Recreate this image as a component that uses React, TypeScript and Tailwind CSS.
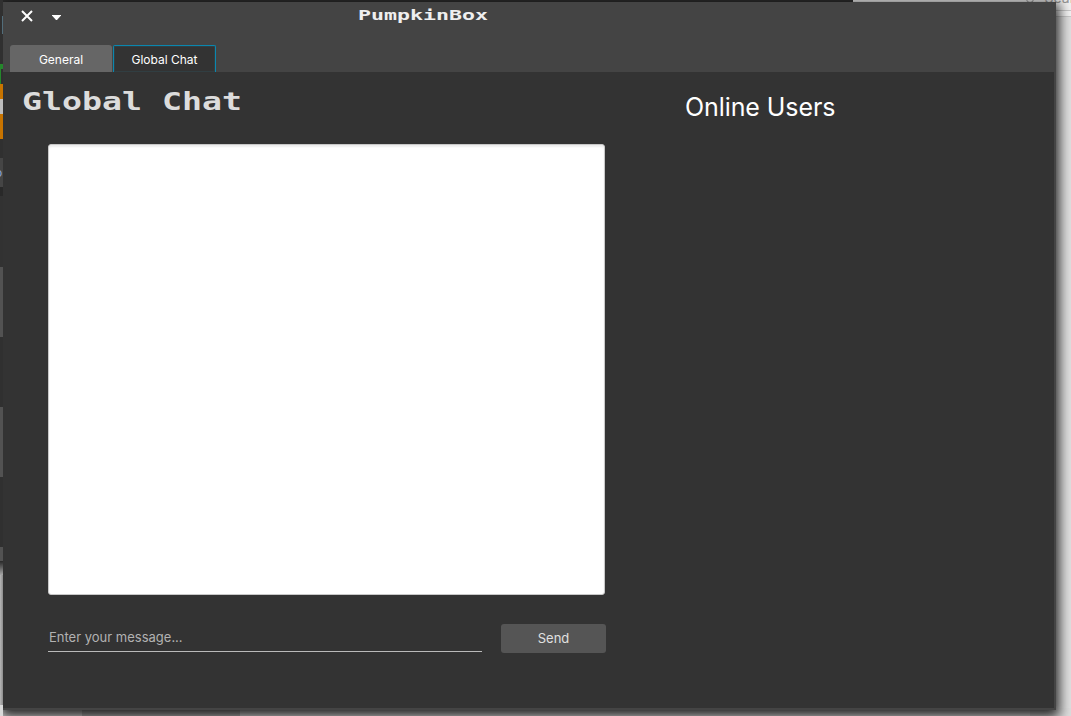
function BackgroundEdge() {
  return (
    <div className="flex w-[3px] flex-col">
      <div className="h-4 bg-[#303030]" />
      <div className="h-[18px] border-l-2 border-[#303030] bg-[#526d7a]" />
      <div className="h-[30px] bg-[#303030]" />
      <div className="h-[5px] bg-[#25872c]" />
      <div className="h-[15px] border-l border-[#25872c] bg-[#303030]" />
      <div className="h-[15px] bg-[#c87400]" />
      <div className="h-[15px] bg-[#bdbdbd]" />
      <div className="h-[25px] bg-[#c87400]" />
      <div className="h-[19px] bg-[#303030]" />
      <div className="h-[29px] overflow-hidden bg-[#454545] pt-[9px]">
        <div className="-ml-[5px] font-['Inter',sans-serif] text-[12px] leading-3 text-[#8fa6d8]">o</div>
      </div>
      <div className="h-[9px] bg-[#292929]" />
      <div className="h-[71px] bg-[#323232]" />
      <div className="h-[70px] bg-[#525252]" />
      <div className="h-[70px] bg-[#303030]" />
      <div className="h-[70px] bg-[#525252]" />
      <div className="h-[70px] bg-[#303030]" />
      <div className="h-[14px] bg-[#525252]" />
      <div className="h-[14px] bg-gradient-to-b from-[#292929] to-[#a8a8a8]" />
      <div className="h-[130px] bg-gradient-to-r from-[#b8b8b8] to-[#8c8c8c]" />
      <div className="flex-1 bg-[#d9d9d9]" />
    </div>
  );
}

function Desktop() {
  return (
    <div className="absolute inset-0 flex flex-col overflow-hidden">
      <div className="flex h-[10px]">
        <div className="w-[853px] bg-[#303030]" />
        <div className="flex flex-1 items-end justify-end overflow-hidden bg-[#f2f2f2] pb-[5px] text-[14px] leading-[14px] text-[#999999]">
          <svg className="mr-[9px] size-[10px]" viewBox="0 0 10 10" fill="none" stroke="currentColor">
            <circle cx="4" cy="4" r="3.5" />
            <path d="m6.5 6.5 3 3" />
          </svg>
          <span className="-mr-5">Search</span>
        </div>
      </div>
      <div className="h-[7px] border-y border-[#c9c9c9] bg-[#f4f4f4]" />
      <div className="flex-1 bg-[#e1e1e1]" />
      <div className="flex h-2">
        <div className="w-[82px] bg-[#eeeeee]" />
        <div className="w-[158px] bg-[#c8c8c8]" />
        <div className="w-[790px] bg-[#f1f1f1]" />
        <div className="flex-1 bg-[#dedede]" />
      </div>
    </div>
  );
}

function TitleBar() {
  return (
    <header className="flex h-[43px] items-start text-white">
      <svg className="ml-[18px] mt-[8px] size-3" viewBox="0 0 12 12" fill="none" stroke="currentColor" strokeWidth="2">
        <path d="M1 1 11 11M11 1 1 11" />
      </svg>
      <svg className="ml-[19px] mt-[13px] h-[5px] w-[9px]" viewBox="0 0 9 5" fill="currentColor">
        <path d="M0 0h9v.5L5 5H4L0 .5z" />
      </svg>
      <h1 className="ml-[297px] mt-[5px] origin-left scale-x-[1.542] whitespace-nowrap font-['DejaVu_Sans_Mono',monospace] text-[14px] leading-4 font-bold text-[#efefef]">
        PumpkinBox
      </h1>
    </header>
  );
}

function Tabs() {
  return (
    <nav className="flex h-[27px] gap-px pl-[7px] text-[12px] text-white">
      <button className="w-[102px] rounded-t-[3px] bg-[#666666] pt-[2px]">General</button>
      <button className="w-[103px] rounded-t-[2px] border border-b-0 border-[#0a87af] bg-[#333333] pt-px shadow-[inset_0_0_0_1px_#313e42]">
        Global Chat
      </button>
    </nav>
  );
}

export default function App() {
  return (
    <div className="relative h-[716px] w-[1071px] overflow-hidden font-['Inter',sans-serif]">
      <Desktop />
      <div className="relative flex h-[716px]">
        <div className="relative z-10 flex">
          <BackgroundEdge />
        </div>
        <div className="mt-[2px] flex h-[708px] w-[1053px] flex-col bg-[#444444] shadow-[0_4px_12px_3px_rgba(0,0,0,0.85)]">
          <TitleBar />
          <Tabs />
          <main className="mr-[2px] mb-[2px] flex flex-1 bg-[#333333]">
            <section className="w-[603px] pl-[19px]">
              <h2 className="mt-[16px] h-7 origin-left scale-x-[1.384] whitespace-nowrap font-['DejaVu_Sans_Mono',monospace] text-[24px] leading-7 font-bold text-[#dcdcdc]">
                Global Chat
              </h2>
              <div className="mt-[28px] ml-[26px] h-[451px] w-[557px] rounded-[3px] border border-[#c8c8c8] bg-white shadow-[inset_0_2px_2px_#eeeeee]" />
              <form className="mt-[29px] ml-[26px] flex gap-[19px]" onSubmit={(event) => event.preventDefault()}>
                <input
                  className="h-7 w-[434px] border-b border-[#bababa] px-px pb-[2px] text-[13px] text-white outline-none placeholder:text-[#b2b2b2]"
                  placeholder="Enter your message..."
                />
                <button className="h-[29px] w-[105px] rounded-[3px] bg-[#555555] text-[13px] text-[#e0e0e0]">Send</button>
              </form>
            </section>
            <aside className="pt-[18px] pl-[79px]">
              <h2 className="text-[25px] leading-[34px] tracking-[-0.08px] whitespace-nowrap text-white">Online Users</h2>
            </aside>
          </main>
        </div>
      </div>
    </div>
  );
}
